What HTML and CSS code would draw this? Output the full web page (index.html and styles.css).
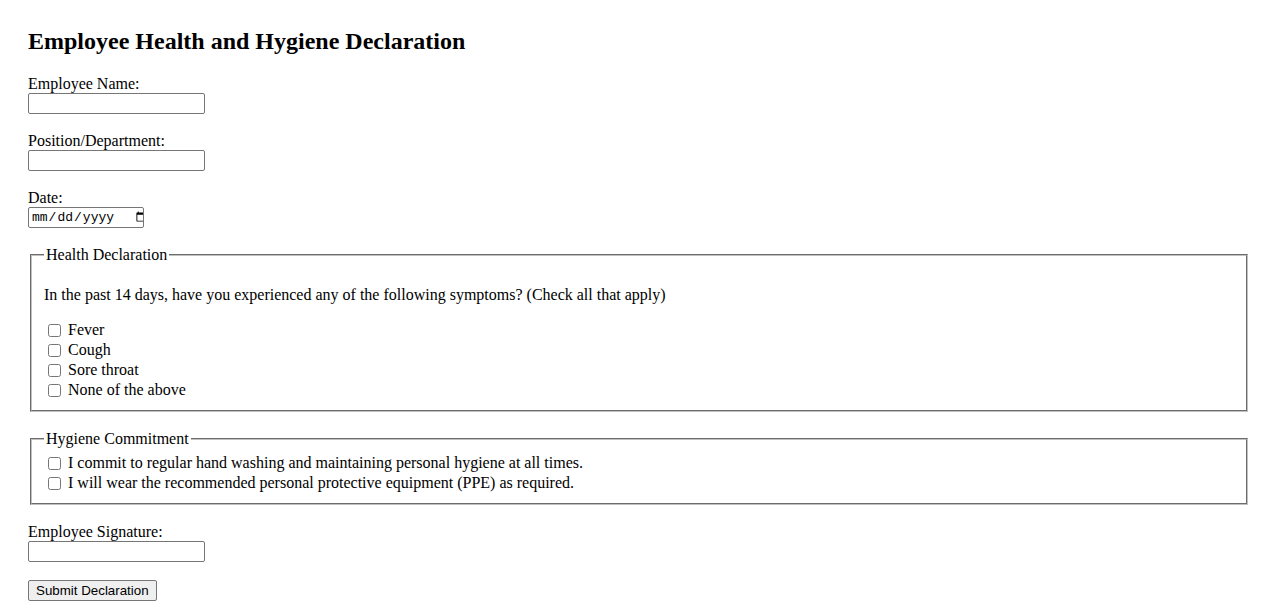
FILE: index.html
```html
<!DOCTYPE html>
<html lang="en">
<head>
<meta charset="utf-8">
<title>Employee Health and Hygiene Declaration</title>
<link rel="stylesheet" href="styles.css">
</head>
<body>
<div class="page">
  <h1 class="title">Employee Health and Hygiene Declaration</h1>
  <form class="form">
    <div class="group">
      <label class="label" for="name">Employee Name:</label>
      <input class="text-input" type="text" id="name">
    </div>
    <div class="group">
      <label class="label" for="position">Position/Department:</label>
      <input class="text-input" type="text" id="position">
    </div>
    <div class="group">
      <label class="label" for="date">Date:</label>
      <input class="date-input" type="date" id="date">
    </div>
    <fieldset class="box">
      <legend class="legend">Health Declaration</legend>
      <p class="question">In the past 14 days, have you experienced any of the following symptoms? (Check all that apply)</p>
      <div class="checks">
        <label class="check"><input class="cb" type="checkbox"> Fever</label>
        <label class="check"><input class="cb" type="checkbox"> Cough</label>
        <label class="check"><input class="cb" type="checkbox"> Sore throat</label>
        <label class="check"><input class="cb" type="checkbox"> None of the above</label>
      </div>
    </fieldset>
    <fieldset class="box">
      <legend class="legend">Hygiene Commitment</legend>
      <div class="checks">
        <label class="check"><input class="cb" type="checkbox"> I commit to regular hand washing and maintaining personal hygiene at all times.</label>
        <label class="check"><input class="cb" type="checkbox"> I will wear the recommended personal protective equipment (PPE) as required.</label>
      </div>
    </fieldset>
    <div class="group">
      <label class="label" for="sig">Employee Signature:</label>
      <input class="text-input" type="text" id="sig">
    </div>
    <button class="submit" type="button">Submit Declaration</button>
  </form>
</div>
</body>
</html>
```

FILE: styles.css
```css
html, body {
  background: #ffffff;
}
body {
  margin: 8px;
  font-family: "Liberation Serif", "Times New Roman", serif;
  font-size: 16px;
  color: #000000;
}
.page {
  padding: 20px;
}
.title {
  font-size: 24px;
  font-weight: bold;
  margin: 0 0 19.92px 0;
}
.form {
  margin: 0;
}
.group {
  margin-bottom: 18px;
}
.label {
  display: block;
}
.text-input {
  display: block;
  box-sizing: border-box;
  width: 177px;
  height: 21px;
  border: 1px solid #767676;
  border-radius: 2px;
  padding: 1px 2px;
  margin: 0;
  font-family: "Liberation Sans", Arial, sans-serif;
  font-size: 13.33px;
  background: #ffffff;
}
.date-input {
  display: flex;
  box-sizing: border-box;
  width: 116px;
  height: 21px;
  border: 1px solid #767676;
  border-radius: 2px;
  padding: 1px 2px 1px 2px;
  margin: 0;
  font-family: "Liberation Mono", "DejaVu Sans Mono", monospace;
  font-size: 13px;
  background: #ffffff;
}
.date-input::-webkit-calendar-picker-indicator {
  width: 12px;
  height: 12px;
  padding: 0;
  margin: 0 2px 0 4px;
}
.box {
  margin: 0 2px 18px 2px;
  padding: 5.6px 12px 10px 12px;
  border: 2px groove #c0c0c0;
}
.legend {
  padding: 0 2px;
}
.question {
  margin: 16px 0;
}
.checks {
  display: flex;
  flex-direction: column;
}
.check {
  display: block;
  height: 20px;
  line-height: 20px;
}
.cb {
  width: 13px;
  height: 13px;
  margin: 3px 3px 3px 4px;
  vertical-align: -2px;
}
.submit {
  display: block;
  box-sizing: border-box;
  height: 21px;
  padding: 1px 7px;
  margin: 0;
  border: 1px solid #767676;
  border-radius: 2px;
  background: #efefef;
  color: #000000;
  font-family: "Liberation Sans", Arial, sans-serif;
  font-size: 13.33px;
}
```
